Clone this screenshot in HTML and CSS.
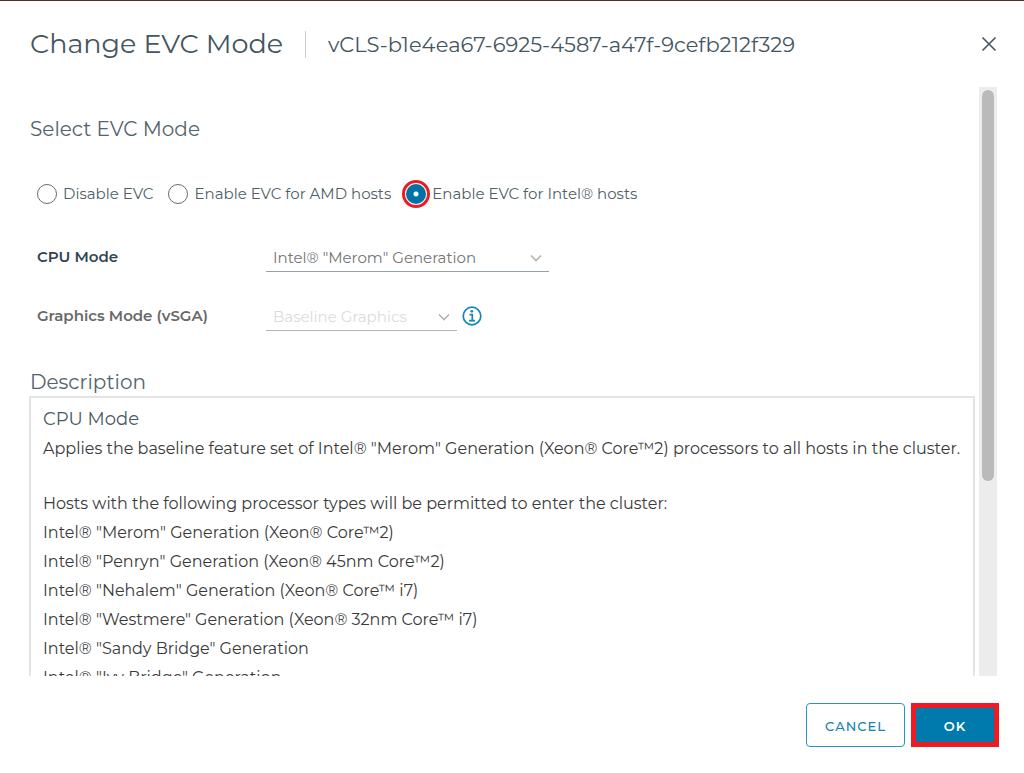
FILE: index.html
```html
<!DOCTYPE html>
<html lang="en">
<head>
<meta charset="utf-8">
<meta name="viewport" content="width=device-width, initial-scale=1">
<title>Change EVC Mode</title>
<link rel="stylesheet" href="styles.css">
</head>
<body>
<div class="dialog" role="dialog" aria-labelledby="dialog-title">
  <header class="dialog-header">
    <h1 class="dialog-title" id="dialog-title">Change EVC Mode</h1>
    <span class="dialog-subtitle">vCLS-b1e4ea67-6925-4587-a47f-9cefb212f329</span>
    <button class="close" type="button" aria-label="Close">
      <svg class="close-icon" viewBox="0 0 16 16"><path d="M1.5 1.5l13 13M14.5 1.5l-13 13"/></svg>
    </button>
  </header>

  <div class="dialog-body">
    <main class="content">
      <h2 class="section-title">Select EVC Mode</h2>

      <div class="radios" role="radiogroup" aria-label="Select EVC Mode">
        <div class="option">
          <input class="radio" type="radio" name="evc" id="evc-off">
          <label for="evc-off">Disable EVC</label>
        </div>
        <div class="option">
          <input class="radio" type="radio" name="evc" id="evc-amd">
          <label for="evc-amd">Enable EVC for AMD hosts</label>
        </div>
        <div class="option">
          <input class="radio" type="radio" name="evc" id="evc-intel" checked>
          <label for="evc-intel">Enable EVC for Intel® hosts</label>
        </div>
      </div>

      <div class="field">
        <label class="field-label" for="cpu-mode">CPU Mode</label>
        <div class="select-wrap select-wide">
          <select class="select" id="cpu-mode"><option>Intel® "Merom" Generation</option></select>
          <svg class="caret" viewBox="0 0 12 8"><path d="M1 1.5l5 5 5-5"/></svg>
        </div>
      </div>

      <div class="field field-disabled">
        <label class="field-label" for="graphics-mode">Graphics Mode (vSGA)</label>
        <div class="select-wrap select-narrow">
          <select class="select" id="graphics-mode" disabled><option>Baseline Graphics</option></select>
          <svg class="caret" viewBox="0 0 12 8"><path d="M1 1.5l5 5 5-5"/></svg>
        </div>
        <svg class="info" viewBox="0 0 20 20" role="img" aria-label="Information">
          <circle class="info-ring" cx="10" cy="10" r="8.8"/>
          <circle class="info-dot" cx="9.8" cy="5.3" r="1.4"/>
          <path class="info-stem" d="M7.5 8.7h2.8v5.8M7 14.7h6"/>
        </svg>
      </div>

      <h2 class="section-title">Description</h2>
      <section class="description">
        <h3 class="description-title">CPU Mode</h3>
        <p>Applies the baseline feature set of Intel® "Merom" Generation (Xeon® Core™2) processors to all hosts in the cluster.</p>
        <p class="hosts-intro">Hosts with the following processor types will be permitted to enter the cluster:</p>
        <p>Intel® "Merom" Generation (Xeon® Core™2)</p>
        <p>Intel® "Penryn" Generation (Xeon® 45nm Core™2)</p>
        <p>Intel® "Nehalem" Generation (Xeon® Core™ i7)</p>
        <p>Intel® "Westmere" Generation (Xeon® 32nm Core™ i7)</p>
        <p>Intel® "Sandy Bridge" Generation</p>
        <p>Intel® "Ivy Bridge" Generation</p>
      </section>
    </main>
    <div class="scrollbar" aria-hidden="true"><div class="thumb"></div></div>
  </div>

  <footer class="dialog-footer">
    <button class="btn btn-outline" type="button">CANCEL</button>
    <button class="btn btn-primary" type="button">OK</button>
  </footer>
</div>
</body>
</html>
```

FILE: styles.css
```css
* { box-sizing: border-box; }

body {
  margin: 0;
  background: #fff;
  color: #3a3a3a;
  font-family: Metropolis, Montserrat, Inter, "Open Sans", sans-serif;
  font-size: 16px;
}

h1, h2, h3, p { margin: 0; font-weight: 400; }

.dialog {
  display: flex;
  flex-direction: column;
  height: 100vh;
  border-top: 1px solid #4b3517;
}

.dialog-header {
  display: flex;
  align-items: center;
  height: 86px;
  flex: none;
  padding: 0 26px 0 30px;
  color: #44565f;
}

.dialog-title { font-size: 27px; line-height: 36px; }

.dialog-subtitle {
  margin-left: 22px;
  padding-left: 22px;
  border-left: 1px solid #ccc;
  font-size: 21px;
  font-weight: 400;
  line-height: 27px;
}

.close {
  display: flex;
  margin-left: auto;
  padding: 0;
  border: 0;
  background: none;
}

.close-icon {
  width: 18px;
  height: 16px;
  fill: none;
  stroke: #455761;
  stroke-width: 1.6;
}

.dialog-body {
  display: flex;
  flex: 1;
  gap: 4px;
  min-height: 0;
  padding: 0 27px 0 29px;
}

.content {
  flex: 1;
  min-width: 0;
  padding-top: 28px;
  overflow-y: auto;
  scrollbar-width: none;
}

.scrollbar {
  flex: none;
  width: 18px;
  padding: 3px;
  background: #ececec;
}

.thumb {
  height: 67%;
  border-radius: 6px;
  background: #bababa;
}

.section-title {
  padding-left: 1px;
  color: #53646d;
  font-size: 20px;
  line-height: 28px;
}

.radios {
  display: flex;
  gap: 15px;
  margin: 41px 0 37px 8px;
  color: #4f5f68;
  font-size: 15px;
  line-height: 20px;
}

.option { display: flex; gap: 6px; }

.radio {
  appearance: none;
  flex: none;
  width: 20px;
  height: 20px;
  margin: 0;
  border: 1px solid #6b6b6b;
  border-radius: 50%;
  background: #fff;
}

.radio:checked {
  border: 0;
  background: radial-gradient(circle, #fff 2px, #0072a3 3px);
  outline: 3px solid #ed1c24;
  outline-offset: 1px;
}

.field {
  display: flex;
  align-items: center;
  height: 31px;
  margin: 0 0 28px 8px;
  color: #304450;
}

.field-disabled { margin-bottom: 37px; color: #686868; }

.field-label { width: 229px; font-size: 15px; font-weight: 600; }

.select-wrap { position: relative; }
.select-wide { width: 283px; }
.select-narrow { width: 191px; }

.select {
  appearance: none;
  display: block;
  width: 100%;
  height: 31px;
  padding: 3px 28px 0 7px;
  border: 0;
  border-bottom: 1px solid #93a1ab;
  border-radius: 0;
  background: none;
  color: #747474;
  font: inherit;
  font-size: 15px;
}

.select:disabled { border-color: #b5b5b5; color: #d9dcdd; opacity: 1; }

.caret {
  position: absolute;
  top: 13px;
  right: 7px;
  width: 12px;
  height: 8px;
  fill: none;
  stroke: #b4b4b4;
  stroke-width: 1.7;
  pointer-events: none;
}

.info { width: 20px; height: 20px; margin-left: 5px; }
.info-ring, .info-stem { fill: none; stroke: #1685b8; stroke-width: 1.7; }
.info-dot { fill: #1685b8; }

.description {
  padding: 7px 0 0 12px;
  border: 2px solid #e4e4e4;
  font-size: 16px;
  line-height: 29px;
}

.description-title { color: #485a64; font-size: 18px; }

.hosts-intro { margin-top: 26px; }

.dialog-footer {
  display: flex;
  flex: none;
  justify-content: flex-end;
  gap: 6px;
  padding: 27px 25px 26px;
}

.btn {
  height: 44px;
  padding: 2px 0 0;
  font: inherit;
  font-size: 13px;
  font-weight: 500;
  letter-spacing: 1px;
}

.btn-outline {
  width: 99px;
  border: 1px solid #2b93bd;
  border-radius: 4px;
  background: #fff;
  color: #1783ae;
}

.btn-primary {
  width: 88px;
  border: 5px solid #ed1c24;
  background: #0079ad;
  color: #fff;
  font-weight: 600;
}
```
